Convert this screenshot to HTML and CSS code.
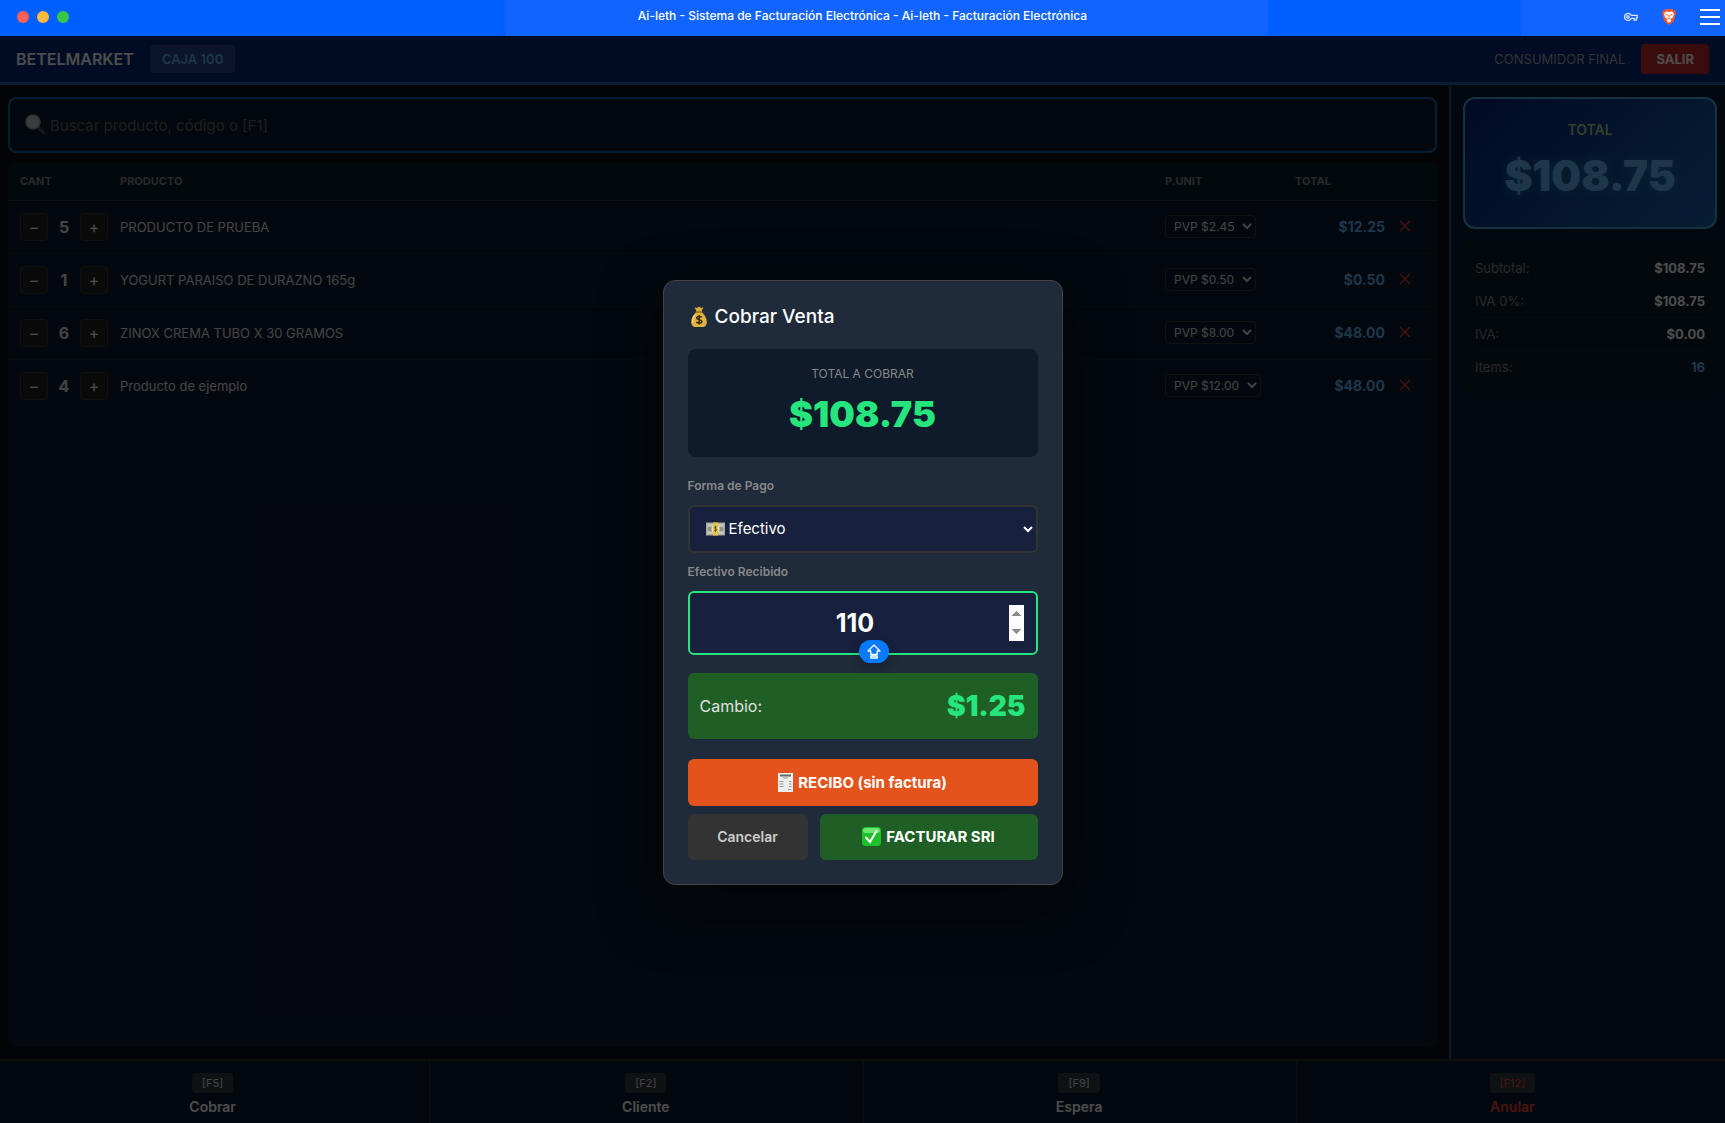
FILE: index.html
```
<!DOCTYPE html>
<html lang="es">
<head>
    <meta charset="UTF-8">
    <meta name="viewport" content="width=device-width, initial-scale=1.0">
    <title>Ai-leth - Facturación Electrónica</title>
    <link rel="stylesheet" href="styles.css">
</head>
<body>
    <!-- Barra de la ventana -->
    <div class="titlebar">
        <div class="lights">
            <span class="light red"></span>
            <span class="light yellow"></span>
            <span class="light green"></span>
        </div>
        <div class="window-title">Ai-leth - Sistema de Facturación Electrónica - Ai-leth - Facturación Electrónica</div>
        <div class="window-icons">
            <svg width="14" height="10" viewBox="0 0 14 10" fill="none" stroke="#dbe7ff" stroke-width="1.3">
                <path d="M7.2 3.3h6.1v2.5h-1v2.4h-2.2V6.3H7.3A3.5 3.5 0 1 1 7.2 3.3z" stroke-linejoin="round"/>
                <circle cx="4" cy="4.9" r="1.2"/>
            </svg>
            <svg width="14" height="16" viewBox="0 0 14 16">
                <path d="M4 0h6l1.3 1.4 1.6-.1L14 4l-.5 1.5L12 12 7 16l-5-4L.5 5.500 0 4l1.100-2.700 1.600.1z" fill="#fb542b"/>
                <path d="M4 2.500l3 .6 3-.6 2 2.300-1.200 3.600-2.300 1.800L9.200 12 7 13.800 4.800 12l.7-1.800-2.300-1.800L2 4.800z" fill="#fff"/>
                <path d="M3.700 5.500l2 .6M10.300 5.500l-2 .6M7 6v2.500M5.500 9L7 10l1.500-1" stroke="#fb542b" stroke-width="1" fill="none"/>
            </svg>
            <svg width="20" height="16" viewBox="0 0 20 16" stroke="#fff" stroke-width="2">
                <path d="M0 1h20M0 8h20M0 15h20"/>
            </svg>
        </div>
    </div>

    <div class="pos">
        <header class="header">
            <div class="header-side">
                <h1>BETELMARKET</h1>
                <span class="caja">CAJA 100</span>
            </div>
            <div class="header-side">
                <span class="cliente">CONSUMIDOR FINAL</span>
                <button class="btn-salir">SALIR</button>
            </div>
        </header>

        <div class="content">
            <main class="main">
                <div class="search">
                    <svg class="search-icon" width="21" height="21" viewBox="0 0 21 21">
                        <path d="M13 13l6 6" stroke="#4a4a4a" stroke-width="3.400" stroke-linecap="round"/>
                        <circle cx="8" cy="8" r="7" fill="#c4c8cc" stroke="#9a9a9a" stroke-width="1.500"/>
                    </svg>
                    <input type="text" placeholder="Buscar producto, código o [F1]" aria-label="Buscar producto">
                </div>

                <div class="table-box">
                    <table>
                        <thead>
                            <tr>
                                <th class="col-cant">CANT</th>
                                <th>PRODUCTO</th>
                                <th class="col-price">P.UNIT</th>
                                <th class="col-total">TOTAL</th>
                                <th class="col-del"></th>
                            </tr>
                        </thead>
                        <tbody>
                            <tr>
                                <td><div class="qty"><button>−</button><span>5</span><button>+</button></div></td>
                                <td class="name">PRODUCTO DE PRUEBA</td>
                                <td><select aria-label="Precio"><option>PVP $2.45</option></select></td>
                                <td class="amount">$12.25</td>
                                <td><button class="btn-del" aria-label="Quitar"><svg width="12" height="12" viewBox="0 0 12 12"><path d="M1 1l10 10M11 1L1 11"/></svg></button></td>
                            </tr>
                            <tr>
                                <td><div class="qty"><button>−</button><span>1</span><button>+</button></div></td>
                                <td class="name">YOGURT PARAISO DE DURAZNO 165g</td>
                                <td><select aria-label="Precio"><option>PVP $0.50</option></select></td>
                                <td class="amount">$0.50</td>
                                <td><button class="btn-del" aria-label="Quitar"><svg width="12" height="12" viewBox="0 0 12 12"><path d="M1 1l10 10M11 1L1 11"/></svg></button></td>
                            </tr>
                            <tr>
                                <td><div class="qty"><button>−</button><span>6</span><button>+</button></div></td>
                                <td class="name">ZINOX CREMA TUBO X 30 GRAMOS</td>
                                <td><select aria-label="Precio"><option>PVP $8.00</option></select></td>
                                <td class="amount">$48.00</td>
                                <td><button class="btn-del" aria-label="Quitar"><svg width="12" height="12" viewBox="0 0 12 12"><path d="M1 1l10 10M11 1L1 11"/></svg></button></td>
                            </tr>
                            <tr>
                                <td><div class="qty"><button>−</button><span>4</span><button>+</button></div></td>
                                <td class="name">Producto de ejemplo</td>
                                <td><select aria-label="Precio"><option>PVP $12.00</option></select></td>
                                <td class="amount">$48.00</td>
                                <td><button class="btn-del" aria-label="Quitar"><svg width="12" height="12" viewBox="0 0 12 12"><path d="M1 1l10 10M11 1L1 11"/></svg></button></td>
                            </tr>
                        </tbody>
                    </table>
                </div>
            </main>

            <aside class="sidebar">
                <div class="total-card">
                    <div class="total-label">TOTAL</div>
                    <div class="total-value">$108.75</div>
                </div>
                <div class="summary">
                    <div class="summary-row"><span>Subtotal:</span><b>$108.75</b></div>
                    <div class="summary-row"><span>IVA 0%:</span><b>$108.75</b></div>
                    <div class="summary-row"><span>IVA:</span><b>$0.00</b></div>
                    <div class="summary-row items"><span>Items:</span><b>16</b></div>
                </div>
            </aside>
        </div>

        <footer class="footer">
            <button class="fkey"><kbd>[F5]</kbd><span>Cobrar</span></button>
            <button class="fkey"><kbd>[F2]</kbd><span>Cliente</span></button>
            <button class="fkey"><kbd>[F9]</kbd><span>Espera</span></button>
            <button class="fkey danger"><kbd>[F12]</kbd><span>Anular</span></button>
        </footer>

        <!-- Modal de cobro -->
        <div class="overlay">
            <div class="modal" role="dialog" aria-labelledby="modal-title">
                <h2 id="modal-title">
                    <svg width="22" height="22" viewBox="0 0 22 22">
                        <path d="M6.500 1l2 1L11 .8 13.500 2l2-1-2.300 5H8.800z" fill="#d9a93c"/>
                        <path d="M8.500 6h5c3 2.500 5.300 6 5.300 10 0 3.500-2 5-4 5H7.200c-2 0-4-1.500-4-5 0-4 2.300-7.500 5.300-10z" fill="#e0b23e"/>
                        <path d="M7 9c-2 2-2.500 5-2 8" stroke="#f4d77c" stroke-width="1.500" fill="none"/>
                        <rect x="7.500" y="5" width="7" height="2" rx="1" fill="#a67a22"/>
                        <path d="M13.700 11.300c-.6-1-5-1.500-5 .8 0 2.200 5.200 1.100 5.200 3.300 0 2.200-4.700 2-5.500.5M11.200 9v9.500" stroke="#3c2c10" stroke-width="1.500" fill="none"/>
                    </svg>
                    Cobrar Venta
                </h2>

                <div class="charge">
                    <div class="charge-label">TOTAL A COBRAR</div>
                    <div class="charge-value">$108.75</div>
                </div>

                <label for="forma">Forma de Pago</label>
                <div class="field">
                    <svg class="field-icon" width="19" height="14" viewBox="0 0 19 14">
                        <rect width="19" height="13" y=".5" fill="#a9aa9c"/>
                        <rect x="1.500" y="2" width="16" height="10" fill="#c9cabd"/>
                        <circle cx="4" cy="7" r="2.500" fill="#8f9184"/>
                        <circle cx="15" cy="7" r="2.500" fill="#8f9184"/>
                        <circle cx="9.500" cy="7" r="4" fill="#e6e3cc"/>
                        <rect x="7" y=".5" width="5" height="13" fill="#e8c544"/>
                        <path d="M10.800 5.300c-.5-.8-2.500-.8-2.500.4s2.500.8 2.500 2.100-2 1.200-2.600.3M9.500 3.800v6.200" stroke="#6b5a1c" fill="none"/>
                    </svg>
                    <select id="forma" class="forma"><option>Efectivo</option></select>
                </div>

                <label for="recibido">Efectivo Recibido</label>
                <div class="field cash">
                    <input type="number" id="recibido" value="110">
                    <span class="caps">
                        <svg width="14" height="15" viewBox="0 0 14 15" fill="none" stroke="#fff" stroke-width="1.300" stroke-linejoin="round">
                            <path d="M7 1l6 6h-2.800v3.500H3.800V7H1z"/>
                            <rect x="3.800" y="12" width="6.400" height="2"/>
                        </svg>
                    </span>
                </div>

                <div class="change">
                    <span>Cambio:</span>
                    <strong>$1.25</strong>
                </div>

                <div class="actions">
                    <button class="btn btn-recibo">
                        <svg width="15" height="19" viewBox="0 0 15 19">
                            <path d="M0 0h15v19H0z" fill="#eee"/>
                            <path d="M2 2.500h11" stroke="#666" stroke-width="2"/>
                            <path d="M5 5h5M1.500 8.500h4M1.500 11h4M1.500 13.500h4M11 8.500h2.500M11 11h2.500M11 13.500h2.500M10 16.500h3.500" stroke="#999"/>
                        </svg>
                        RECIBO (sin factura)
                    </button>
                    <button class="btn btn-cancelar">Cancelar</button>
                    <button class="btn btn-facturar">
                        <svg width="19" height="19" viewBox="0 0 19 19">
                            <rect width="19" height="19" rx="3.500" fill="#1fc02b"/>
                            <rect x="1" y="1" width="17" height="5" rx="2.500" fill="#6be66f"/>
                            <path d="M4 10.500l4 4.500 6.500-11" stroke="#fff" stroke-width="2" fill="none" stroke-linecap="round"/>
                        </svg>
                        FACTURAR SRI
                    </button>
                </div>
            </div>
        </div>
    </div>
</body>
</html>
```
FILE: styles.css
```
:root {
    --blue: #1565b0;
    --light-blue: #64b5f6;
    --panel: #0d1b30;
    --green: #27e57d;
    --dark-green: #1f5f26;
    --line: #1a2430;
}

* {
    box-sizing: border-box;
    margin: 0;
    padding: 0;
}

body {
    height: 100vh;
    display: flex;
    flex-direction: column;
    background: #0a0e14;
    color: #e0e0e0;
    font-family: Inter, "Liberation Sans", sans-serif;
    font-size: 13px;
    overflow: hidden;
}

button, input, select {
    font-family: inherit;
}

button {
    border: none;
    cursor: pointer;
}

/* Barra de la ventana */
.titlebar {
    height: 36px;
    flex: none;
    display: grid;
    grid-template-columns: 1fr auto 1fr;
    align-items: center;
    padding: 0 5px 2px;
    background: linear-gradient(90deg, #005fff 29.3%, #1164ff 29.3% 73.5%, #005fff 73.5% 88.2%, #1164ff 88.2%);
}

.lights {
    display: flex;
    gap: 8px;
    padding-left: 12px;
}

.light {
    width: 12px;
    height: 12px;
    border-radius: 50%;
}

.red { background: #ff5f57; }
.yellow { background: #ffbb3d; }
.green { background: #34c749; }

.window-title {
    color: #fff;
    font-size: 12px;
    font-weight: 500;
    line-height: 16px;
    padding-bottom: 2px;
}

.window-icons {
    display: flex;
    justify-content: flex-end;
    align-items: center;
    gap: 24px;
}

/* Punto de venta */
.pos {
    position: relative;
    flex: 1;
    min-height: 0;
    display: flex;
    flex-direction: column;
}

.header {
    height: 49px;
    flex: none;
    display: flex;
    justify-content: space-between;
    align-items: center;
    padding: 0 16px;
    background: #002578;
    border-bottom: 3px solid #1a64a8;
}

.header-side {
    display: flex;
    align-items: center;
    gap: 16px;
}

.header h1 {
    font-size: 16px;
    font-weight: 600;
    color: #fff;
}

.caja {
    padding: 6px 12px;
    border-radius: 4px;
    background: rgba(255, 255, 255, 0.15);
    color: var(--light-blue);
    font-size: 13px;
    font-weight: 600;
    line-height: 16px;
}

.cliente {
    color: #aaa;
}

.btn-salir {
    padding: 7px 15px;
    border-radius: 4px;
    background: #c62828;
    color: #fff;
    font-size: 13px;
    font-weight: 700;
    line-height: 16px;
}

.content {
    flex: 1;
    min-height: 0;
    display: flex;
}

.main {
    flex: 1;
    display: flex;
    flex-direction: column;
    gap: 10px;
    padding: 12px 12px 12px 8px;
}

.search {
    position: relative;
}

.search-icon {
    position: absolute;
    left: 17px;
    top: 17px;
}

.search input {
    display: block;
    width: 100%;
    height: 56px;
    padding: 0 16px 0 40px;
    background: var(--panel);
    border: 2px solid var(--blue);
    border-radius: 8px;
    color: #fff;
    font-size: 15px;
}

.search input::placeholder {
    color: #666;
}

.table-box {
    flex: 1;
    background: var(--panel);
    border-radius: 8px;
    overflow: hidden;
}

table {
    width: 100%;
    border-collapse: collapse;
    table-layout: fixed;
}

th {
    height: 37px;
    padding-left: 12px;
    background: #07202c;
    border-bottom: 1px solid #2c3238;
    color: #888;
    font-size: 11px;
    font-weight: 700;
    text-align: left;
}

td {
    height: 53px;
    padding-left: 12px;
    border-bottom: 1px solid var(--line);
}

tbody tr:last-child td {
    border-bottom: none;
}

.col-cant { width: 100px; }
.col-price { width: 130px; }
.col-total { width: 102px; }
.col-del { width: 52px; }

.qty {
    display: flex;
    align-items: center;
    justify-content: space-between;
}

.qty button {
    width: 28px;
    height: 28px;
    background: #222;
    border: 1px solid #3a3a3a;
    border-radius: 4px;
    color: #fff;
    font-size: 16px;
    line-height: 24px;
}

.qty span {
    font-size: 16px;
    font-weight: 700;
}

td select {
    height: 23px;
    padding: 0 4px;
    background: var(--panel);
    border: 1px solid #3a3a3a;
    border-radius: 4px;
    color: #e0e0e0;
    font-size: 12px;
}

.amount {
    color: var(--light-blue);
    font-size: 14px;
    font-weight: 700;
    text-align: right;
}

.btn-del {
    display: block;
    width: 16px;
    height: 28px;
    background: none;
}

.btn-del path {
    stroke: #e53935;
    stroke-width: 1.5px;
}

.sidebar {
    width: 276px;
    display: flex;
    flex-direction: column;
    gap: 12px;
    padding: 12px 8px 12px 12px;
    background: #071f30;
    border-left: 2px solid var(--blue);
}

.total-card {
    height: 132px;
    padding: 21px 16px;
    border: 2px solid #4aa3dc;
    border-radius: 12px;
    background: linear-gradient(135deg, #002578, #1a64b0);
    text-align: center;
}

.total-label {
    color: #b0d090;
    font-size: 14px;
    font-weight: 600;
    line-height: 20px;
}

.total-value {
    margin-top: 10px;
    color: var(--light-blue);
    font-size: 42px;
    font-weight: 900;
    line-height: 52px;
    text-shadow: 0 0 10px rgba(80, 220, 200, 0.3);
}

.summary {
    padding: 11px 12px;
    border-radius: 8px;
    background: #0d1b2a;
}

.summary-row {
    display: flex;
    justify-content: space-between;
    align-items: center;
    height: 33px;
    border-bottom: 1px solid var(--line);
}

.summary-row span {
    color: #888;
}

.summary-row b {
    color: #fff;
}

.summary-row.items {
    height: 31px;
    border-bottom: none;
}

.summary-row.items b {
    color: var(--light-blue);
}

.footer {
    height: 64px;
    flex: none;
    display: flex;
    gap: 8px;
    background: var(--panel);
    border-top: 2px solid #333;
}

.fkey {
    position: relative;
    flex: 1;
    display: flex;
    flex-direction: column;
    align-items: center;
    gap: 5px;
    padding-top: 12px;
    background: none;
    color: #fff;
    font-size: 14px;
    font-weight: 600;
}

/* separador entre teclas */
.fkey:not(:last-child)::after {
    content: "";
    position: absolute;
    top: 0;
    bottom: 0;
    right: -5px;
    width: 1px;
    background: #2c3238;
}

.fkey kbd {
    padding: 0 10px;
    border-radius: 4px;
    background: #333d44;
    color: #e0e0e0;
    font-family: inherit;
    font-size: 11px;
    font-weight: 400;
    line-height: 20px;
}

.fkey.danger, .fkey.danger kbd {
    color: #f44336;
}

/* Modal */
.overlay {
    position: absolute;
    inset: 0;
    display: flex;
    justify-content: center;
    align-items: center;
    padding-top: 5px;
    background: rgba(0, 0, 0, 0.7);
}

.modal {
    width: 400px;
    padding: 24px;
    background: #1f2a3a;
    border: 1px solid #444;
    border-radius: 12px;
    box-shadow: 0 20px 60px rgba(0, 0, 0, 0.5);
}

.modal h2 {
    display: flex;
    align-items: center;
    gap: 5px;
    margin-bottom: 20px;
    color: #fff;
    font-size: 19px;
    font-weight: 500;
    line-height: 24px;
}

.charge {
    margin-bottom: 20px;
    padding: 17px 16px 15px;
    border-radius: 8px;
    background: #0f1b2a;
    text-align: center;
}

.charge-label {
    color: #888;
    font-size: 12px;
    line-height: 16px;
}

.charge-value {
    margin-top: 4px;
    color: var(--green);
    font-size: 36px;
    font-weight: 900;
    line-height: 56px;
}

.modal label {
    display: block;
    margin-bottom: 10px;
    color: #888;
    font-size: 12px;
    font-weight: 600;
    line-height: 18px;
}

.field {
    position: relative;
    margin-bottom: 10px;
}

.field-icon {
    position: absolute;
    left: 18px;
    top: 17px;
}

.forma {
    display: block;
    width: 100%;
    height: 48px;
    padding: 0 2px 0 35px;
    background: #17203d;
    border: 2px solid #333;
    border-radius: 6px;
    color: #fff;
    font-size: 15px;
}

.cash {
    margin-bottom: 18px;
}

.cash input {
    display: block;
    width: 100%;
    height: 64px;
    padding: 12px;
    background: #17203d;
    border: 2px solid var(--green);
    border-radius: 6px;
    outline: none;
    color: #fff;
    font-size: 25px;
    font-weight: 700;
    text-align: center;
}

.cash input::-webkit-inner-spin-button {
    height: 36px;
    opacity: 1;
}

/* aviso de mayúsculas */
.caps {
    position: absolute;
    left: 171px;
    top: 49px;
    width: 30px;
    height: 23px;
    display: flex;
    justify-content: center;
    align-items: center;
    border-radius: 12px;
    background: #067aff;
    box-shadow: 0 4px 12px rgba(0, 0, 0, 0.2);
}

.change {
    display: flex;
    justify-content: space-between;
    align-items: center;
    height: 66px;
    margin-bottom: 20px;
    padding: 0 12px;
    border-radius: 6px;
    background: var(--dark-green);
    font-size: 16px;
}

.change strong {
    color: var(--green);
    font-size: 28px;
    font-weight: 900;
}

.actions {
    display: grid;
    grid-template-columns: 120px 1fr;
    gap: 8px 12px;
}

.btn {
    height: 46px;
    display: flex;
    justify-content: center;
    align-items: center;
    gap: 5px;
    border-radius: 6px;
    color: #fff;
    font-size: 15px;
    font-weight: 700;
}

.btn-recibo {
    grid-column: 1 / -1;
    height: 47px;
    background: #e3531c;
}

.btn-cancelar {
    background: #333;
    color: #ccc;
    font-size: 14px;
    font-weight: 600;
}

.btn-facturar {
    background: var(--dark-green);
}
```
